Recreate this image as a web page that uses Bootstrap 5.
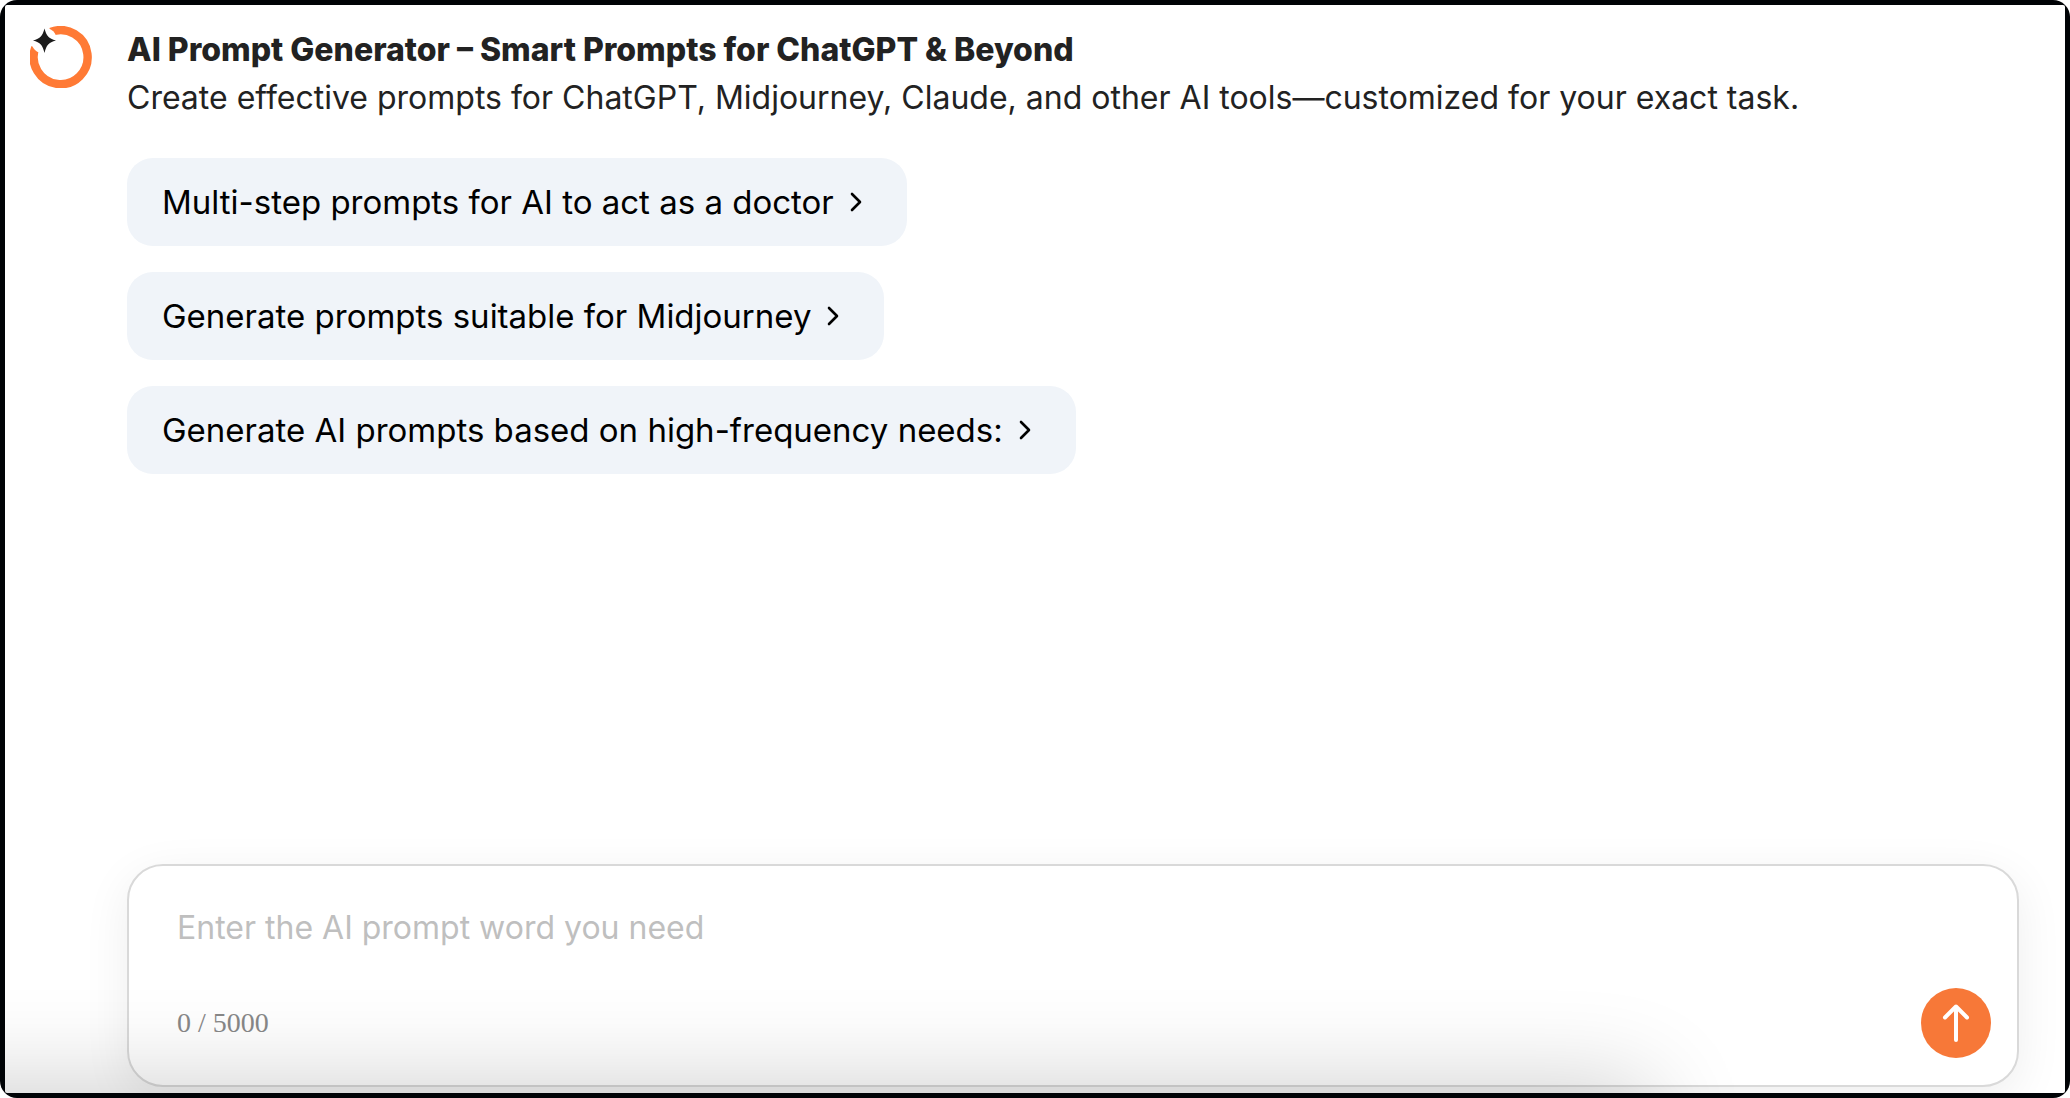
<!DOCTYPE html>
<html lang="en">
<head>
<meta charset="utf-8">
<meta name="viewport" content="width=device-width, initial-scale=1">
<title>AI Prompt Generator</title>
<link href="https://cdn.jsdelivr.net/npm/bootstrap@5.3.0/dist/css/bootstrap.min.css" rel="stylesheet">
<style>
  body { font-family: Inter, "Open Sans", sans-serif; font-size: 32px; line-height: 48px; color: #222; background: #fff; }
  .app-frame { background: #000306; border-radius: 17px; padding: 5px; }
  .app-panel { position: relative; background: #fff; border-radius: 2px; padding: 21px 46px 6px 25px; column-gap: 35px; overflow: hidden; }
  /* soft shade rising from the bottom edge */
  .app-panel::after { content: ""; position: absolute; left: -200px; right: 424px; top: 100%; height: 200px; box-shadow: 0 0 96px 10px rgba(0, 0, 0, .19); pointer-events: none; }
  .app-logo { width: 62px; height: 62px; }
  .intro-title { font-size: 32px; line-height: 48px; font-weight: 800; }
  .chips { gap: 26px; margin-top: 36px; }
  .chip { display: inline-flex; align-items: center; gap: 6px; padding: 20px 35px; border: 0; border-radius: 26px; background: #f0f4f9; color: #000; font-size: 33px; line-height: 48px; text-align: left; }
  .chip:hover { background: #e6ebf4; color: #000; }
  .chip svg { width: 32px; height: 32px; }
  .composer { border: 2px solid #d9d9d9; border-radius: 36px; background: #fff; padding: 38px 26px 27px 48px; box-shadow: 0 12px 48px rgba(0, 0, 0, .07); }
  textarea.composer-input { font-size: 32px; line-height: 48px; height: 48px; min-height: 48px; resize: none; color: #222; }
  .composer-input::placeholder { color: #bfbfbf; opacity: 1; }
  .composer-foot { margin-top: 36px; }
  .counter { font-family: "Liberation Serif", serif; font-size: 28px; line-height: 32px; color: #888; }
  .send { width: 70px; height: 70px; background: #f77838; }
  .send:hover { background: #e9692a; }
</style>
</head>
<body>
<div class="app-frame min-vh-100 d-flex">
  <main class="app-panel d-flex flex-fill">
    <svg class="app-logo flex-shrink-0" viewBox="0 0 62 62" role="img" aria-label="Logo">
      <path d="M20.8 6A27 27 0 1 1 5.4 21.500" fill="none" stroke="#ff7a35" stroke-width="8.4"/>
      <path d="M14 14.500m-13 0a13 13 0 1 0 26 0a13 13 0 1 0 -26 0" fill="#fff"/>
      <path d="M14.500 2.500C16.500 10 18.500 12.500 26 14.500C18.500 16.500 16.500 19 14.500 27C12.500 19 10.500 16.500 3 14.500C10.500 12.500 12.500 10 14.500 2.500Z" fill="#1c1c1c"/>
    </svg>
    <div class="d-flex flex-column flex-fill">
      <h1 class="intro-title m-0">AI Prompt Generator – Smart Prompts for ChatGPT &amp; Beyond</h1>
      <p class="m-0">Create effective prompts for ChatGPT, Midjourney, Claude, and other AI tools—customized for your exact task.</p>
      <div class="chips d-flex flex-column align-items-start">
        <button type="button" class="chip">Multi-step prompts for AI to act as a doctor
          <svg viewBox="0 0 32 32" fill="none" stroke="#000" stroke-width="2.600" stroke-linecap="round" stroke-linejoin="round" aria-hidden="true"><path d="M12 8l8 8-8 8"/></svg>
        </button>
        <button type="button" class="chip">Generate prompts suitable for Midjourney
          <svg viewBox="0 0 32 32" fill="none" stroke="#000" stroke-width="2.600" stroke-linecap="round" stroke-linejoin="round" aria-hidden="true"><path d="M12 8l8 8-8 8"/></svg>
        </button>
        <button type="button" class="chip">Generate AI prompts based on high-frequency needs:
          <svg viewBox="0 0 32 32" fill="none" stroke="#000" stroke-width="2.600" stroke-linecap="round" stroke-linejoin="round" aria-hidden="true"><path d="M12 8l8 8-8 8"/></svg>
        </button>
      </div>
      <form class="composer mt-auto">
        <label class="visually-hidden" for="prompt">Prompt</label>
        <textarea id="prompt" class="composer-input form-control border-0 shadow-none rounded-0 bg-transparent p-0 d-block" rows="1" maxlength="5000" placeholder="Enter the AI prompt word you need"></textarea>
        <div class="composer-foot d-flex justify-content-between align-items-center">
          <span class="counter">0 / 5000</span>
          <button type="button" class="send btn rounded-circle border-0 p-0 d-flex align-items-center justify-content-center" aria-label="Send">
            <svg width="40" height="40" viewBox="0 0 40 40" fill="none" stroke="#fff" stroke-width="4" stroke-linecap="round" stroke-linejoin="round" aria-hidden="true"><path d="M20 37V3.500M9 14.500L20 3.500l11 11"/></svg>
          </button>
        </div>
      </form>
    </div>
  </main>
</div>
<script src="https://cdn.jsdelivr.net/npm/bootstrap@5.3.0/dist/js/bootstrap.bundle.min.js"></script>
</body>
</html>
